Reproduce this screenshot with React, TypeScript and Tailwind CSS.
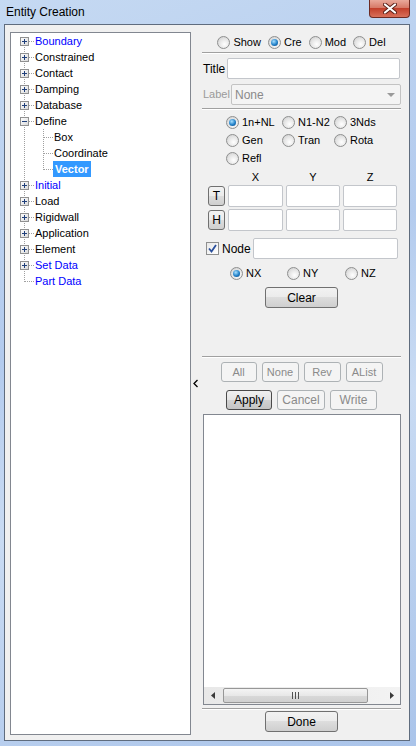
import React from "react";

type TreeRow = {
  label: string;
  blue?: boolean;
  kind: "plus" | "minus" | "child" | "last";
  first?: boolean;
  lastChild?: boolean;
  sel?: boolean;
};

const rows: TreeRow[] = [
  { label: "Boundary", blue: true, kind: "plus", first: true },
  { label: "Constrained", kind: "plus" },
  { label: "Contact", kind: "plus" },
  { label: "Damping", kind: "plus" },
  { label: "Database", kind: "plus" },
  { label: "Define", kind: "minus" },
  { label: "Box", kind: "child" },
  { label: "Coordinate", kind: "child" },
  { label: "Vector", kind: "child", lastChild: true, sel: true },
  { label: "Initial", blue: true, kind: "plus" },
  { label: "Load", kind: "plus" },
  { label: "Rigidwall", kind: "plus" },
  { label: "Application", kind: "plus" },
  { label: "Element", kind: "plus" },
  { label: "Set Data", blue: true, kind: "plus" },
  { label: "Part Data", blue: true, kind: "last" },
];

const dot = { stroke: "#a0a0a0", strokeWidth: 1, strokeDasharray: "1 1", shapeRendering: "crispEdges" as const };

function Connector({ row }: { row: TreeRow }) {
  const child = row.kind === "child";
  const w = child ? 42 : 23;
  return (
    <svg width={w} height={16} className="shrink-0">
      {row.kind === "last" ? (
        <>
          <line x1={13.5} y1={0} x2={13.5} y2={8.5} {...dot} />
          <line x1={14} y1={8.5} x2={23} y2={8.5} {...dot} />
        </>
      ) : (
        <line x1={13.5} y1={row.first ? 8 : 0} x2={13.5} y2={16} {...dot} />
      )}
      {child && (
        <>
          <line x1={32.5} y1={0} x2={32.5} y2={row.lastChild ? 8.5 : 16} {...dot} />
          <line x1={33} y1={8.5} x2={42} y2={8.5} {...dot} />
        </>
      )}
      {(row.kind === "plus" || row.kind === "minus") && (
        <>
          <line x1={18} y1={8.5} x2={23} y2={8.5} {...dot} />
          <defs>
            <linearGradient id="bx" x1="0" y1="0" x2="1" y2="1">
              <stop offset="0" stopColor="#ffffff" />
              <stop offset="1" stopColor="#d8d8d8" />
            </linearGradient>
          </defs>
          <rect x={9.5} y={4.5} width={8} height={8} fill="url(#bx)" stroke="#919191" shapeRendering="crispEdges" />
          <line x1={11} y1={8.5} x2={16} y2={8.5} stroke="#1f3f7a" shapeRendering="crispEdges" />
          {row.kind === "plus" && (
            <line x1={13.5} y1={6} x2={13.5} y2={11} stroke="#1f3f7a" shapeRendering="crispEdges" />
          )}
        </>
      )}
    </svg>
  );
}

function Radio({ on }: { on?: boolean }) {
  return (
    <span className="w-[13px] h-[13px] shrink-0 rounded-full border border-[#8e8f8f] bg-[radial-gradient(circle_at_60%_65%,#ffffff,#e4e4e4_55%,#c8c8c8)] flex items-center justify-center">
      {on && (
        <span className="w-[7px] h-[7px] rounded-full bg-[radial-gradient(circle_at_40%_35%,#a8e0ff,#2080c8_55%,#0b3f78)]" />
      )}
    </span>
  );
}

function RadioItem({ label, on }: { label: string; on?: boolean }) {
  return (
    <span className="flex items-center gap-[3px] h-full">
      <Radio on={on} />
      <span>{label}</span>
    </span>
  );
}

function Btn({
  children,
  className,
  disabled,
  hot,
}: {
  children: React.ReactNode;
  className: string;
  disabled?: boolean;
  hot?: boolean;
}) {
  let look =
    "border-[#707070] bg-[linear-gradient(#f2f2f2,#ebebeb_50%,#dddddd_50%,#cfcfcf)] text-black";
  if (disabled) look = "border-[#adb2b5] bg-[#f4f4f4] text-[#8a8a8a]";
  if (hot) look = "border-[#4a4a4a] bg-[linear-gradient(#f0f0f0,#e4e4e4_50%,#d2d2d2_50%,#c4c4c4)] text-black";
  return (
    <div className={`flex items-center justify-center rounded-[3px] border shrink-0 ${look} ${className}`}>
      {children}
    </div>
  );
}

function Field({ className }: { className: string }) {
  return <div className={`bg-white border border-[#c3c6cb] rounded-[2px] shrink-0 ${className}`} />;
}

function Sep() {
  return <div className="h-[2px] border-t border-[#a0a0a0] border-b border-b-white shrink-0" />;
}

export default function App() {
  return (
    <div className="w-[416px] h-[746px] overflow-hidden bg-[linear-gradient(160deg,#c5d9f2,#b3cbee_40%,#c9dbf3_60%,#aac4ea)] font-['Liberation_Sans',Arial,sans-serif] text-[11px] text-black">
      {/* title bar */}
      <div className="h-[24px] flex items-start">
        <div className="pl-[6px] pt-[4px] text-[12px] leading-[16px] text-black">Entity Creation</div>
        <div className="ml-auto mr-[6px] w-[41px] h-[18px] rounded-b-[4px] border border-t-0 border-[#6d2a22] bg-[linear-gradient(#e9a99b,#d77a68_45%,#c2402c_50%,#d8705a)] flex items-center justify-center">
          <svg width="14" height="11" viewBox="0 0 14 11">
            <path d="M2 1.5 L12 9.5 M12 1.5 L2 9.5" stroke="#5a2018" strokeWidth="4" strokeLinecap="round" />
            <path d="M2 1.5 L12 9.5 M12 1.5 L2 9.5" stroke="#ffffff" strokeWidth="2.2" strokeLinecap="round" />
          </svg>
        </div>
      </div>

      {/* client area */}
      <div className="ml-[4px] w-[406px] h-[717px] border border-[#5f6c7e] bg-[#f0f0f0] flex items-start">
        {/* tree */}
        <div className="ml-[5px] mt-[7px] w-[181px] h-[703px] bg-white border border-[#828790] shrink-0">
          {rows.map((r) => (
            <div key={r.label} className="h-[16px] flex items-center">
              <Connector row={r} />
              <span
                className={
                  r.sel
                    ? "h-[16px] leading-[16px] px-[2px] bg-[#3399ff] text-white font-bold"
                    : `h-[16px] leading-[16px] px-[1px] ${r.blue ? "text-[#0000ff]" : "text-black"}`
                }
              >
                {r.label}
              </span>
            </div>
          ))}
        </div>

        {/* splitter chevron */}
        <div className="mt-[7px] w-[11px] h-[703px] flex items-center pl-[2px] shrink-0">
          <svg width="6" height="9" viewBox="0 0 6 9">
            <path d="M4.5 1 L1 4.5 L4.5 8" stroke="#000" strokeWidth="1.3" fill="none" />
          </svg>
        </div>

        {/* right panel */}
        <div className="w-[199px] flex flex-col shrink-0">
          <div className="mt-[9px] h-[17px] flex items-center justify-center gap-[7px]">
            <RadioItem label="Show" />
            <RadioItem label="Cre" on />
            <RadioItem label="Mod" />
            <RadioItem label="Del" />
          </div>
          <div className="mt-[1px]">
            <Sep />
          </div>

          <div className="mt-[4px] h-[21px] flex items-center">
            <span className="w-[25px] pl-[1px] text-[12px]">Title</span>
            <Field className="w-[173px] h-[21px]" />
          </div>

          <div className="mt-[5px] h-[21px] flex items-center">
            <span className="w-[29px] shrink-0 whitespace-nowrap pl-[1px] text-[#9a9a9a]">Label</span>
            <div className="w-[170px] h-[21px] border border-[#c3c3c3] rounded-[2px] bg-[#f4f4f4] flex items-center pl-[3px] text-[12px] text-[#8a8a8a]">
              <span>None</span>
              <svg className="ml-auto mr-[5px]" width="8" height="4" viewBox="0 0 8 4">
                <path d="M0 0 H8 L4 4 Z" fill="#9a9a9a" />
              </svg>
            </div>
          </div>

          <div className="mt-[3px]">
            <Sep />
          </div>

          <div className="mt-[3px] pl-[24px] grid grid-cols-[56px_52px_52px] auto-rows-[18px]">
            <RadioItem label="1n+NL" on />
            <RadioItem label="N1-N2" />
            <RadioItem label="3Nds" />
            <RadioItem label="Gen" />
            <RadioItem label="Tran" />
            <RadioItem label="Rota" />
            <RadioItem label="Refl" />
          </div>

          <div className="mt-[3px] h-[14px] flex items-center pl-[6px] gap-[3px]">
            <span className="w-[17px]" />
            <span className="w-[55px] text-center">X</span>
            <span className="w-[54px] text-center">Y</span>
            <span className="w-[54px] text-center">Z</span>
          </div>

          <div className="mt-[1px] h-[22px] flex items-center pl-[6px] gap-[3px]">
            <Btn className="w-[17px] h-[20px] text-[12px]">T</Btn>
            <Field className="w-[55px] h-[22px]" />
            <Field className="w-[54px] h-[22px]" />
            <Field className="w-[54px] h-[22px]" />
          </div>
          <div className="mt-[2px] h-[22px] flex items-center pl-[6px] gap-[3px]">
            <Btn className="w-[17px] h-[20px] text-[12px]">H</Btn>
            <Field className="w-[55px] h-[22px]" />
            <Field className="w-[54px] h-[22px]" />
            <Field className="w-[54px] h-[22px]" />
          </div>

          <div className="mt-[7px] h-[21px] flex items-center pl-[4px]">
            <span className="w-[13px] h-[13px] border border-[#8e8f8f] bg-[linear-gradient(135deg,#e8e8e8,#ffffff)] flex items-center justify-center shrink-0">
              <svg width="9" height="9" viewBox="0 0 9 9">
                <path d="M1 4.5 L3.5 7.5 L8 1" stroke="#2a4f9c" strokeWidth="1.8" fill="none" />
              </svg>
            </span>
            <span className="ml-[3px] text-[12px]">Node</span>
            <Field className="ml-auto mr-[3px] w-[145px] h-[21px]" />
          </div>

          <div className="mt-[6px] h-[16px] pl-[28px] grid grid-cols-[57px_58px_57px]">
            <RadioItem label="NX" on />
            <RadioItem label="NY" />
            <RadioItem label="NZ" />
          </div>

          <div className="mt-[6px] flex justify-center">
            <Btn className="w-[73px] h-[21px] text-[12px]">Clear</Btn>
          </div>

          <div className="mt-[48px]">
            <Sep />
          </div>

          <div className="mt-[4px] h-[20px] flex justify-center gap-[5px]">
            <Btn disabled className="w-[36px] h-[20px]">All</Btn>
            <Btn disabled className="w-[37px] h-[20px]">None</Btn>
            <Btn disabled className="w-[37px] h-[20px]">Rev</Btn>
            <Btn disabled className="w-[37px] h-[20px]">AList</Btn>
          </div>
          <div className="mt-[8px] h-[20px] flex justify-center gap-[5px]">
            <Btn hot className="w-[46px] h-[20px] text-[12px]">Apply</Btn>
            <Btn disabled className="w-[48px] h-[20px] text-[12px]">Cancel</Btn>
            <Btn disabled className="w-[47px] h-[20px] text-[12px]">Write</Btn>
          </div>

          <div className="mt-[4px] ml-[1px] w-[198px] h-[291px] bg-white border border-[#828790] flex flex-col">
            <div className="flex-1" />
            <div className="h-[17px] bg-[linear-gradient(90deg,#e8e8e8,#f3f3f3)] flex items-center">
              <div className="w-[17px] h-[17px] flex items-center justify-center">
                <svg width="4" height="7" viewBox="0 0 4 7">
                  <path d="M4 0 V7 L0 3.5 Z" fill="#3a3a3a" />
                </svg>
              </div>
              <div className="ml-[2px] w-[145px] h-[15px] rounded-[2px] border border-[#979797] bg-[linear-gradient(#f4f4f4,#e8e8e8_50%,#d9d9d9_50%,#d0d0d0)] flex items-center justify-center gap-[2px]">
                <span className="w-px h-[7px] bg-[#505050]" />
                <span className="w-px h-[7px] bg-[#505050]" />
                <span className="w-px h-[7px] bg-[#505050]" />
              </div>
              <div className="ml-auto w-[17px] h-[17px] flex items-center justify-center">
                <svg width="4" height="7" viewBox="0 0 4 7">
                  <path d="M0 0 V7 L4 3.5 Z" fill="#3a3a3a" />
                </svg>
              </div>
            </div>
          </div>

          <div className="mt-[3px]">
            <Sep />
          </div>
          <div className="mt-[1px] flex justify-center">
            <Btn className="w-[73px] h-[21px] text-[12px]">Done</Btn>
          </div>
        </div>
      </div>
    </div>
  );
}
